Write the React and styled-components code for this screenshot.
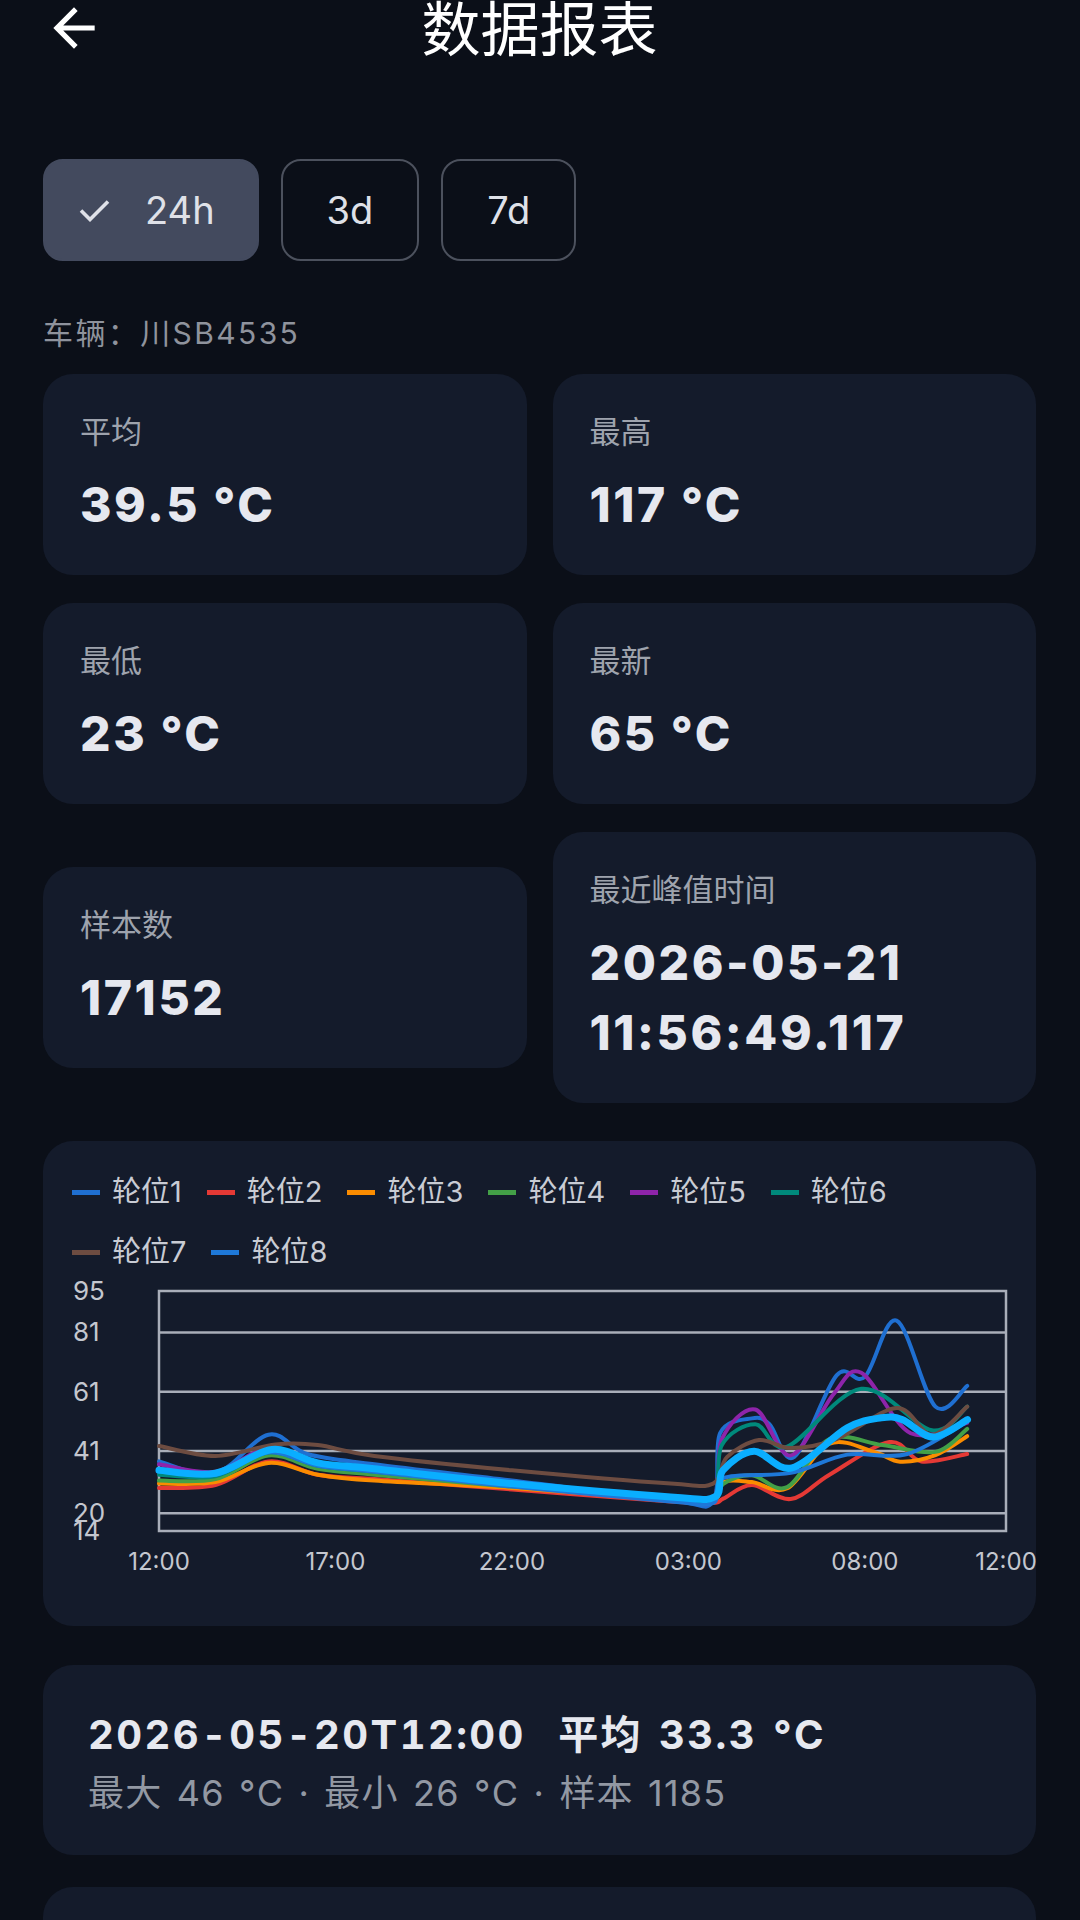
import React from 'react';
import styled, { createGlobalStyle } from 'styled-components';

const GlobalStyle = createGlobalStyle`
  html, body { margin: 0; padding: 0; background: #0b0f18; }
  body { font-family: Inter, "Noto Sans CJK SC", sans-serif; color: #e6e8ef; }
  * { box-sizing: border-box; }
`;

const Page = styled.div`
  width: 1080px;
  padding: 0 44px 0 43px;
  display: flex;
  flex-direction: column;
`;

const Header = styled.header`
  height: 56px;
  display: grid;
  grid-template-columns: 1fr auto 1fr;
  align-items: center;
`;

const BackButton = styled.button`
  justify-self: start;
  width: 62px;
  height: 62px;
  margin-top: -4px;
  padding: 0;
  border: none;
  background: transparent;
  color: #ffffff;
  display: flex;
  align-items: center;
  justify-content: center;
`;

const Title = styled.h1`
  margin: 0;
  font-size: 59px;
  line-height: 60px;
  font-weight: 400;
  color: #ffffff;
`;

const ChipRow = styled.div`
  display: flex;
  gap: 22px;
  margin-top: 103px;
`;

const Chip = styled.button`
  height: 102px;
  border-radius: 20px;
  display: flex;
  align-items: center;
  gap: 35px;
  padding: ${p => (p.$selected ? '0 42px 0 34px' : '0 44px')};
  background: ${p => (p.$selected ? '#434a5e' : 'transparent')};
  border: 2.5px solid ${p => (p.$selected ? '#434a5e' : '#4c515d')};
  color: #dfe1e8;
  font-family: Inter, "Noto Sans CJK SC", sans-serif;
  font-size: 38px;
  font-weight: 400;
`;

const Vehicle = styled.div`
  margin-top: 52px;
  font-size: 30px;
  line-height: 40px;
  color: #8f939d;
  letter-spacing: 2.4px;
`;

const StatGrid = styled.div`
  margin-top: 21px;
  display: grid;
  grid-template-columns: 1fr 1fr;
  column-gap: 26px;
  row-gap: 28px;
  align-items: center;
`;

const Card = styled.div`
  background: #141b2b;
  border-radius: 30px;
`;

const StatCard = styled(Card)`
  padding: 36px 37px 35px;
  display: flex;
  flex-direction: column;
  gap: 16px;
`;

const StatLabel = styled.div`
  font-size: 31px;
  line-height: 44px;
  color: #9ea3ad;
`;

const StatValue = styled.div`
  font-size: 48px;
  line-height: 70px;
  font-weight: 800;
  color: #e6e8ef;
  letter-spacing: 2.6px;
`;

const ChartCard = styled(Card)`
  margin-top: 38px;
  padding: 31px 29px 33px;
`;

const Legend = styled.div`
  display: flex;
  flex-wrap: wrap;
  column-gap: 25px;
  row-gap: 20px;
`;

const LegendItem = styled.div`
  display: flex;
  align-items: center;
  gap: 12px;
  font-size: 29px;
  line-height: 40px;
  color: #c9ccd4;
`;

const Swatch = styled.span`
  width: 28px;
  height: 5px;
  background: ${p => p.$color};
`;

const ChartSvg = styled.svg`
  display: block;
  overflow: visible;
  margin-top: 3px;
`;

const ListCard = styled(Card)`
  margin-top: ${p => p.$gap}px;
  padding: 42px 45px 38px;
  display: flex;
  flex-direction: column;
  gap: 6px;
`;

const ListTitle = styled.div`
  font-size: 40px;
  line-height: 56px;
  font-weight: 700;
  color: #e6e8ef;
  white-space: pre;
  letter-spacing: 2.4px;
  word-spacing: 3px;
  font-variant-numeric: tabular-nums;
`;

const ListSub = styled.div`
  font-size: 36px;
  line-height: 48px;
  color: #9298a3;
  letter-spacing: 1.2px;
  word-spacing: 3px;
  white-space: pre;
`;

const PLOT_L = 87;
const PLOT_W = 847;
const PLOT_T = 16;
const PLOT_H = 240;
const px = h => PLOT_L + (h * PLOT_W) / 24;
const py = v => PLOT_T + ((95 - v) * PLOT_H) / 81;

function smooth(points) {
  const p = points.map(([h, v]) => [px(h), py(v)]);
  let d = `M${p[0][0].toFixed(1)},${p[0][1].toFixed(1)}`;
  for (let i = 0; i < p.length - 1; i++) {
    const p0 = p[i - 1] || p[i];
    const p1 = p[i];
    const p2 = p[i + 1];
    const p3 = p[i + 2] || p2;
    const c1x = p1[0] + (p2[0] - p0[0]) / 6;
    const c1y = p1[1] + (p2[1] - p0[1]) / 6;
    const c2x = p2[0] - (p3[0] - p1[0]) / 6;
    const c2y = p2[1] - (p3[1] - p1[1]) / 6;
    d += ` C${c1x.toFixed(1)},${c1y.toFixed(1)} ${c2x.toFixed(1)},${c2y.toFixed(1)} ${p2[0].toFixed(1)},${p2[1].toFixed(1)}`;
  }
  return d;
}

const series = [
  { name: '轮位1', color: '#1f6fd1', pts: [[0,37.5],[1.6,33.5],[3.1,46.5],[4.2,40],[6.1,36.5],[10,31],[14.5,24.5],[15.7,24],[15.9,47],[16.8,52],[17.3,50],[18,39],[19.2,66.5],[20,66],[20.9,85],[22,56],[22.9,63]] },
  { name: '轮位2', color: '#e53935', pts: [[0,28.5],[1.6,29.5],[3.1,37.5],[4.5,33],[6.1,31.5],[10,28],[14.5,24],[15.7,23.5],[16,25],[16.8,29.5],[17.9,24.8],[19,33],[20.7,44],[21.6,37.5],[22.9,40]] },
  { name: '轮位3', color: '#fb8c00', pts: [[0,30],[1.6,30.5],[3.1,37],[4.5,33],[6.1,31],[10,28.5],[14.5,24.5],[15.7,24],[16,30.5],[16.8,30.5],[17.8,28.4],[19,43.5],[20.3,40.5],[21,37.4],[22,39.6],[22.9,46]] },
  { name: '轮位4', color: '#43a047', pts: [[0,31],[1.6,31.5],[3.1,39.5],[4.5,35],[6.1,33],[10,29],[14.5,25],[15.7,24.5],[16,30],[16.8,32.8],[17.8,28.8],[19,45],[20.5,43],[22,40.7],[22.9,48.5]] },
  { name: '轮位5', color: '#8e24aa', pts: [[0,36.5],[1.6,34],[3.1,42],[4.5,37],[6.1,35],[10,30],[14.5,25],[15.7,24.5],[15.95,45],[16.9,55],[17.9,39.5],[19.1,60],[19.9,67.4],[21.3,47],[22.9,50.5]] },
  { name: '轮位6', color: '#00897b', pts: [[0,33],[1.6,32.5],[3.1,40.5],[4.5,36],[6.1,34],[10,29.5],[14.5,25],[15.7,24.5],[15.95,43],[16.9,50],[17.8,42.5],[19.9,62],[21.9,48],[22.9,56]] },
  { name: '轮位7', color: '#6d4c41', pts: [[0,42.7],[1.6,39.3],[3.3,43.2],[4.5,43],[6.1,39.3],[10,34.5],[14.5,30],[15.7,30],[16.1,39],[17,44.7],[17.9,42],[19.2,45],[20.9,55.5],[21.9,46.5],[22.9,56]] },
  { name: '轮位8', color: '#1e78d8', pts: [[0,35],[1.6,33],[3.1,40.5],[4.5,36],[6.1,34],[10,29],[14.5,24],[15.7,23.5],[16,31.9],[17.9,33.6],[19.5,39.8],[21.2,40],[22.9,51]] },
];

const avg = [[0,34.5],[1.6,33.5],[3.2,41.5],[4.5,37],[6.1,35],[10,30],[14.5,25.5],[15.75,25.5],[15.98,34.5],[16.86,40.9],[17.94,35.3],[19.5,48.8],[20.47,52.2],[21.06,51.6],[21.94,45.7],[22.91,51.6]];

const yTicks = [95, 81, 61, 41, 20, 14];
const xTicks = [[0, '12:00'], [5, '17:00'], [10, '22:00'], [15, '03:00'], [20, '08:00'], [24, '12:00']];

function TrendChart() {
  return (
    <ChartSvg width="936" height="318" viewBox="0 0 936 318">
      <rect x={PLOT_L} y={PLOT_T} width={PLOT_W} height={PLOT_H} fill="none" stroke="#a9aeb9" strokeWidth="2.5" />
      {[81, 61, 41, 20].map(v => (
        <line key={v} x1={PLOT_L} x2={PLOT_L + PLOT_W} y1={py(v)} y2={py(v)} stroke="#a9aeb9" strokeWidth="2.5" />
      ))}
      {yTicks.map(v => (
        <text key={v} x="1" y={py(v) + 9} fontSize="26" fill="#c4c7cf" fontFamily="Inter, sans-serif">{v}</text>
      ))}
      {xTicks.map(([h, t], i) => (
        <text key={i} x={px(h)} y="295" fontSize="24" fill="#c4c7cf" textAnchor="middle" fontFamily="Inter, sans-serif">{t}</text>
      ))}
      {series.map(s => (
        <path key={s.name} d={smooth(s.pts)} fill="none" stroke={s.color} strokeWidth="4" strokeLinejoin="round" strokeLinecap="round" />
      ))}
      <path d={smooth(avg)} fill="none" stroke="#0aaeff" strokeWidth="7" strokeLinejoin="round" strokeLinecap="round" />
    </ChartSvg>
  );
}

const stats = [
  { label: '平均', value: '39.5 °C' },
  { label: '最高', value: '117 °C' },
  { label: '最低', value: '23 °C' },
  { label: '最新', value: '65 °C' },
  { label: '样本数', value: '17152' },
  { label: '最近峰值时间', value: ['2026-05-21', '11:56:49.117'] },
];

const rows = [
  { title: '2026-05-20T12:00  平均 33.3 °C', sub: '最大 46 °C · 最小 26 °C · 样本 1185', gap: 39 },
  { title: '2026-05-20T13:00  平均 32.1 °C', sub: '最大 44 °C · 最小 25 °C · 样本 1172', gap: 32 },
];

export default function App() {
  return (
    <>
      <GlobalStyle />
      <Page>
        <Header>
          <BackButton aria-label="返回">
            <svg width="62" height="62" viewBox="0 0 24 24" fill="currentColor">
              <path d="M20 11H7.83l5.59-5.59L12 4l-8 8 8 8 1.41-1.41L7.83 13H20v-2z" />
            </svg>
          </BackButton>
          <Title>数据报表</Title>
          <span />
        </Header>

        <ChipRow>
          <Chip $selected>
            <svg width="31" height="23" viewBox="0 0 31 23">
              <polyline points="2,11.5 11,20.5 29,2.5" fill="none" stroke="#dfe1e8" strokeWidth="3.6" />
            </svg>
            24h
          </Chip>
          <Chip>3d</Chip>
          <Chip>7d</Chip>
        </ChipRow>

        <Vehicle>车辆：川SB4535</Vehicle>

        <StatGrid>
          {stats.map(s => (
            <StatCard key={s.label}>
              <StatLabel>{s.label}</StatLabel>
              <StatValue>
                {Array.isArray(s.value) ? s.value.map(v => <div key={v}>{v}</div>) : s.value}
              </StatValue>
            </StatCard>
          ))}
        </StatGrid>

        <ChartCard>
          <Legend>
            {series.map(s => (
              <LegendItem key={s.name}>
                <Swatch $color={s.color} />
                {s.name}
              </LegendItem>
            ))}
          </Legend>
          <TrendChart />
        </ChartCard>

        {rows.map(r => (
          <ListCard key={r.title} $gap={r.gap}>
            <ListTitle>{r.title}</ListTitle>
            <ListSub>{r.sub}</ListSub>
          </ListCard>
        ))}
      </Page>
    </>
  );
}
